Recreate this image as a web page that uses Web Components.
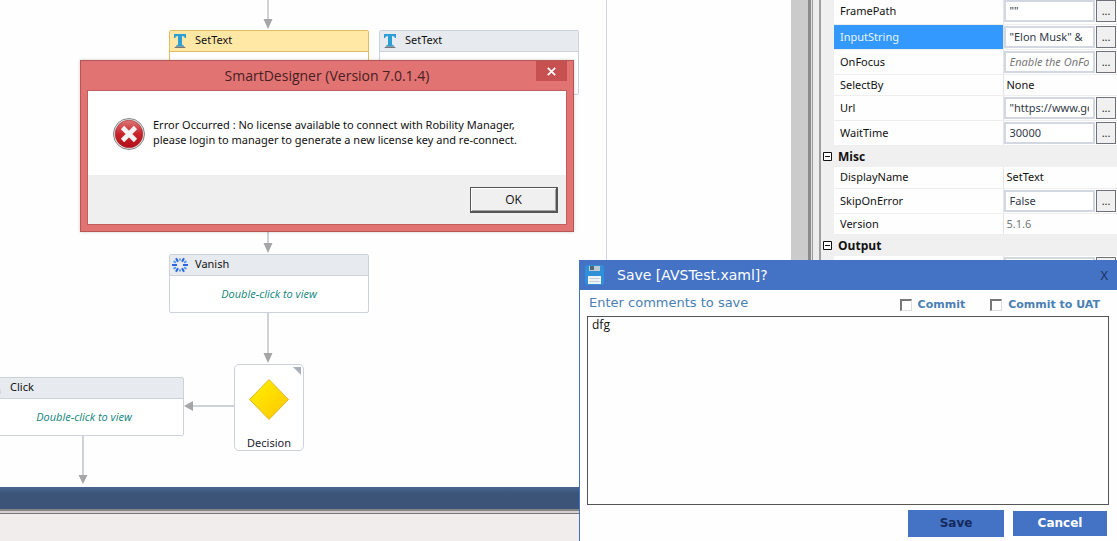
<!DOCTYPE html>
<html lang="en">
<head>
<meta charset="utf-8">
<title>SmartDesigner</title>
<style>
  html, body { margin: 0; height: 100%; }
  body { overflow: hidden; font: 12px/16px "Noto Sans", "Open Sans", sans-serif; color: #111; background: #fefefe; }
</style>
</head>
<body>
<designer-app></designer-app>

<script>
const define = (name, html, setup) => {
  const template = document.createElement('template');
  template.innerHTML = html;
  customElements.define(name, class extends HTMLElement {
    constructor() {
      super();
      this.attachShadow({ mode: 'open' }).append(template.content.cloneNode(true));
    }
    connectedCallback() {
      if (setup) setup(this, this.shadowRoot);
    }
  });
};

/* Activity card on the flow canvas */
define('activity-card', `
<style>
  :host { display: block; box-sizing: border-box; width: 200px; border: 1px solid #cdd2da; border-radius: 2px; background: #fff; --head: #e7ebef; --edge: #cdd2da; }
  :host([selected]) { border-color: #e0bd62; --head: #ffe8a6; --edge: #e0bd62; }
  header { display: flex; align-items: center; gap: 7px; height: 20px; padding: 0 2px; background: var(--head); border-bottom: 1px solid var(--edge); font-size: 11px; line-height: 20px; }
  ::slotted(svg) { width: 16px; height: 16px; flex: none; }
  ::slotted(span) { padding-bottom: 2px; }
  .body { display: flex; align-items: center; justify-content: center; height: 36px; font-family: "Open Sans", sans-serif; font-size: 11px; font-style: italic; color: #0f857c; }
  :host([tall]) .body { height: 42px; }
</style>
<header><slot name="icon"></slot><slot name="title"></slot></header>
<div class="body"><slot></slot></div>`);

/* Decision node */
define('decision-node', `
<style>
  :host { display: flex; flex-direction: column; align-items: center; box-sizing: border-box; width: 70px; border: 1px solid #cdd2da; border-radius: 5px; background: #fff; font-size: 11px; }
  svg { display: block; width: 68px; height: 71px; }
  span { line-height: 14px; color: #223; }
</style>
<svg viewBox="0 0 68 71">
  <defs><linearGradient id="g" x1="0" y1="0" x2="1" y2="1"><stop offset="0" stop-color="#fff200"/><stop offset="1" stop-color="#ffc400"/></linearGradient></defs>
  <path d="M58 2h8v8z" fill="#a9b0b9"/>
  <path d="M34 14.500L53.500 34.500L34 54.500L14.500 34.500z" fill="url(#g)" stroke="#d9b730"/>
</svg>
<span><slot></slot></span>`);

/* Flow canvas with freely placed nodes */
define('flow-canvas', `
<style>
  :host { display: block; position: relative; flex: 1; overflow: hidden; background: #fefefe; }
  .lines { position: absolute; inset: 0; width: 610px; height: 490px; }
  activity-card, decision-node { position: absolute; }
</style>
<svg class="lines" viewBox="0 0 610 490">
  <g stroke="#cfd2d9" stroke-width="2" fill="none">
    <path d="M268 0V22M268 225V246M268 313V356M234 406H190M83 436V478"/>
    <path d="M606.500 0V490" stroke="#d0d0e0" stroke-width="1"/>
  </g>
  <path fill="#a6a6a6" d="M263.500 19h9l-4.500 10zM263.500 243h9l-4.500 10zM263.500 353h9l-4.500 10zM78.500 475h9l-4.500 9zM193 401v10l-9-5z"/>
</svg>
<activity-card selected tall style="left:169px;top:30px">
  <svg slot="icon" viewBox="0 0 16 16"><path d="M2 1h12v4h-1q-.5-2-3-2v8q0 1.500 2 1.500v1H4v-1q2 0 2-1.500V3Q3.500 3 3 5H2z" fill="#2e9fd4"/><path d="M2 15l2-1.500h8l2 1.500z" fill="#75757b"/></svg>
  <span slot="title">SetText</span>
</activity-card>
<activity-card tall style="left:379px;top:30px">
  <svg slot="icon" viewBox="0 0 16 16"><path d="M2 1h12v4h-1q-.5-2-3-2v8q0 1.500 2 1.500v1H4v-1q2 0 2-1.500V3Q3.500 3 3 5H2z" fill="#2e9fd4"/><path d="M2 15l2-1.500h8l2 1.500z" fill="#75757b"/></svg>
  <span slot="title">SetText</span>
</activity-card>
<activity-card style="left:169px;top:254px">
  <svg slot="icon" viewBox="0 0 16 16"><g stroke="#2867e0" stroke-width="2"><path d="M0 8h5M11 8h5M4 1.200l2 3.600M12 1.200l-2 3.600M4 14.800l2-3.600M12 14.800l-2-3.600"/><path d="M8 1.500v2M8 12.500v2M1.500 4.200l2.500 1.500M14.500 4.200l-2.500 1.500M1.500 11.800l2.500-1.500M14.500 11.800l-2.500-1.500" stroke="#5c9df0"/></g></svg>
  <span slot="title">Vanish</span>Double-click to view
</activity-card>
<activity-card style="left:-16px;top:377px">
  <svg slot="icon" viewBox="0 0 16 16"><path d="M9 4q5 2 5 10H5V6z" fill="#cfd3d8"/></svg>
  <span slot="title">Click</span>Double-click to view
</activity-card>
<decision-node style="left:234px;top:364px">Decision</decision-node>`);

/* Property grid */
define('property-grid', `
<style>
  :host { display: flex; box-sizing: border-box; width: 326px; background: #f0f0f0; }
  .rail { width: 17px; background: #cbcbcb; }
  .edge { box-sizing: border-box; width: 13px; border-left: 3px solid #8b8b8b; border-right: 2px solid #a0a0a0; background: linear-gradient(90deg, #e2e2e2 1px, #999 1px 2px, #ececec 2px); }
  table { flex: 1; align-self: flex-start; border-collapse: collapse; table-layout: fixed; width: 296px; margin-top: -1px; font-size: 12px; }
  col.gutter { width: 13px; } col.name { width: 169px; }
  td, th { padding: 0; box-sizing: border-box; text-align: left; font-weight: normal; overflow: hidden; }
  tr { height: 21px; }
  tr.edit { height: 25px; }
  tr.group { height: 22px; }
  tr:not(.group) > :nth-child(n+2) { background: #fefefe; border-bottom: 1px solid #eee; }
  tr:not(.group) > th { padding-left: 6px; font-size: 11px; }
  tr:not(.group) > td:last-child { border-left: 1px solid #e4e4e8; padding-left: 3px; font-size: 11px; }
  tr.edit > td:last-child { padding-left: 0 !important; }
  tr.sel > th { background: #3399ff !important; color: #e8f4ff; }
  .group th { font: bold 12px/16px "Open Sans", sans-serif; padding-left: 4px; padding-top: 1px; }
  .group svg { display: block; width: 9px; height: 9px; margin-left: 2px; }
  .field { display: flex; gap: 1px; height: 22px; }
  input { flex: 1; min-width: 0; box-sizing: border-box; border: 2px solid #d3d7e2; background: #fff; padding: 0 4px; font: 11px/16px "Noto Sans", "Open Sans", sans-serif; color: #333a48; outline: 0; }
  input::placeholder { color: #777; opacity: 1; font-style: italic; }
  button { width: 20px; margin-right: 1px; box-sizing: border-box; border: 1px solid #6e7178; background: #f0f0f0; padding: 0; font: 11px/16px "Open Sans", sans-serif; color: #111; }
  .dim { color: #777; }
</style>
<div class="rail"></div><div class="edge"></div>
<table><colgroup><col class="gutter"><col class="name"><col></colgroup><tbody></tbody></table>`,
(host, root) => {
  const rows = [
    ['FramePath', '""', 'edit'], ['InputString', '"Elon Musk" &', 'edit sel'], ['OnFocus', '', 'edit', 'Enable the OnFocus'],
    ['SelectBy', 'None', ''], ['Url', '"https://www.google.com"', 'edit'], ['WaitTime', '30000', 'edit'], ['Misc'],
    ['DisplayName', 'SetText', ''], ['SkipOnError', 'False', 'edit'], ['Version', '5.1.6', 'dim'], ['Output'], ['', '', 'edit']
  ];
  const body = root.querySelector('tbody');
  for (const [name, value, kind, hint] of rows) {
    const tr = document.createElement('tr');
    if (value === undefined) {
      tr.className = 'group';
      tr.innerHTML = '<td><svg viewBox="0 0 9 9"><path d="M.5.5h8v8h-8zM2 4.500h5" fill="#fff" stroke="#111"/></svg></td><th colspan="2"></th>';
    } else {
      tr.className = kind === 'dim' ? '' : kind;
      tr.innerHTML = '<td></td><th scope="row"></th><td></td>';
      const cell = tr.lastElementChild;
      if (kind.startsWith('edit')) {
        cell.innerHTML = '<div class="field"><input type="text"><button type="button"></button></div>';
        const input = cell.querySelector('input');
        input.setAttribute('value', value);
        input.setAttribute('aria-label', name || 'Result');
        if (hint) input.placeholder = hint;
        const more = cell.querySelector('button');
        more.setAttribute('aria-label', 'Edit value');
        if (name) more.textContent = '...';
      } else {
        cell.textContent = value;
        if (kind === 'dim') cell.classList.add('dim');
      }
    }
    tr.querySelector('th').textContent = name;
    body.append(tr);
  }
});

/* Error message box */
define('message-box', `
<style>
  :host { display: block; box-sizing: border-box; width: 494px; border: 1px solid #b85656; background: #e17373; padding: 0 6px 6px; box-shadow: 0 0 3px #0003; }
  header { display: flex; height: 29px; align-items: center; position: relative; }
  h2 { flex: 1; margin: 0; text-align: center; font: 14px/20px "Open Sans", sans-serif; color: #47201f; }
  .close { position: absolute; right: 0; top: 0; width: 31px; height: 20px; padding: 0; border: 0; background: #c75050; }
  .close svg { display: block; margin: auto; width: 9px; height: 9px; }
  .pane { border: 1px solid #c05e5e; background: #fff; }
  .msg { display: flex; gap: 7px; height: 58px; padding: 26px 24px 0; font-size: 11px; line-height: 15px; color: #111; white-space: nowrap; }
  .msg svg { width: 34px; height: 34px; flex: none; }
  p { margin: 0; }
  footer { display: flex; justify-content: flex-end; padding: 12px 8px 11px; background: #efefef; }
  .ok { width: 88px; height: 26px; border: 1px solid #555; border-right-width: 2px; border-bottom-width: 2px; background: #f0f0f0; padding: 0; box-shadow: inset 1px 1px #fff, inset -1px -1px #a5a5a5; font: 12px/16px "Open Sans", sans-serif; color: #111; }
</style>
<header><h2><slot name="title"></slot></h2>
  <button class="close" type="button" aria-label="Close"><svg viewBox="0 0 9 9"><path d="M.8.800l7.400 7.400M8.200.800L.800 8.200" stroke="#fff" stroke-width="1.700"/></svg></button></header>
<div class="pane">
  <div class="msg">
    <svg viewBox="0 0 34 34"><defs><linearGradient id="r" x1="0" y1="0" x2="0" y2="1"><stop offset="0" stop-color="#dc7777"/><stop offset=".5" stop-color="#c8232b"/><stop offset="1" stop-color="#b3101b"/></linearGradient></defs>
      <circle cx="17" cy="17" r="15.500" fill="#e8eaea" stroke="#858585"/><circle cx="17" cy="17" r="13.800" fill="url(#r)" stroke="#a52026" stroke-width=".6"/>
      <path d="M10.500 10.500l13 13M23.500 10.500l-13 13" stroke="#f3f3f5" stroke-width="4.600"/></svg>
    <p><slot></slot></p>
  </div>
  <footer><button class="ok" type="button">OK</button></footer>
</div>`);

/* Save dialog */
define('save-dialog', `
<style>
  :host { display: flex; flex-direction: column; box-sizing: border-box; border-left: 1px solid #4472c4; background: #fefefe; font-family: "DejaVu Sans", sans-serif; font-size: 13px; }
  header { display: flex; align-items: center; height: 30px; background: #4472c4; color: #fff; padding: 0 9px 0 5px; gap: 13px; }
  header svg { width: 19px; height: 20px; }
  h2 { flex: 1; margin: 0; font-size: 14px; font-weight: normal; }
  header button { border: 0; padding: 0; background: none; color: #1c2f5c; font: 13px/16px "Open Sans", sans-serif; }
  .opts { display: flex; align-items: center; height: 26px; padding: 0 17px 0 9px; color: #4a80b4; }
  .opts > label:first-child { flex: 1; }
  .check { display: flex; align-items: center; gap: 6px; margin-left: 25px; padding-top: 4px; font-weight: bold; font-size: 11px; }
  .check input { appearance: none; box-sizing: border-box; margin: 0; width: 12px; height: 12px; border: 1px solid #ddd; border-top: 2px solid #777; border-left: 2px solid #777; background: #fff; }
  textarea { flex: 1; margin: 0 8px 0 7px; box-sizing: border-box; border: 1px solid #555; resize: none; padding: 0 4px; font: 12px/16px "Open Sans", sans-serif; color: #111; background: #fefefe; outline: 0; }
  footer { display: flex; align-items: center; justify-content: flex-end; gap: 9px; height: 36px; padding-right: 10px; }
  footer button { width: 94px; height: 25px; border: 0; padding: 0; background: #4472c4; color: #fff; font: bold 12px/16px "DejaVu Sans", sans-serif; }
  footer .save { width: 96px; height: 27px; color: #152a5c; }
</style>
<header>
  <svg viewBox="0 0 19 20"><rect width="19" height="20" rx="3" fill="#2f8fd8"/><path d="M4 1h11v5H4z" fill="#bfc9d0"/><path d="M5 1h4v4H5z" fill="#4e6675"/><path d="M3 11h13v8H3z" fill="#eef3f5"/><path d="M4.500 13.500h10M4.500 16.500h10" stroke="#c6ced4"/></svg>
  <h2><slot name="title"></slot></h2><button type="button">X</button>
</header>
<div class="opts">
  <label for="c">Enter comments to save</label>
  <label class="check"><input type="checkbox">Commit</label>
  <label class="check"><input type="checkbox">Commit to UAT</label>
</div>
<textarea id="c">dfg</textarea>
<footer><button class="save" type="button">Save</button><button type="button">Cancel</button></footer>`);

/* Application shell */
define('designer-app', `
<style>
  :host { display: flex; position: relative; height: 100vh; overflow: hidden; }
  main { display: flex; flex-direction: column; flex: 1; min-width: 0; }
  .band { height: 22px; background: linear-gradient(#4a6590, #3c5478 30%); flex: none; }
  .status { height: 30px; border-top: 2px solid #858585; background: linear-gradient(#d5d1d1 2px, #77777c 2px 3px, #f0edec 3px); flex: none; }
  .work { display: flex; flex: 1; min-height: 0; }
  message-box { position: absolute; left: 80px; top: 60px; }
  save-dialog { position: absolute; left: 579px; right: 0; top: 260px; bottom: 0; }
</style>
<main>
  <div class="work"><flow-canvas></flow-canvas><property-grid></property-grid></div>
  <div class="band"></div><div class="status"></div>
</main>
<message-box><span slot="title">SmartDesigner (Version 7.0.1.4)</span>Error Occurred : No license available to connect with Robility Manager,<br>please login to manager to generate a new license key and re-connect.</message-box>
<save-dialog><span slot="title">Save [AVSTest.xaml]?</span></save-dialog>`);
</script>
</body>
</html>
